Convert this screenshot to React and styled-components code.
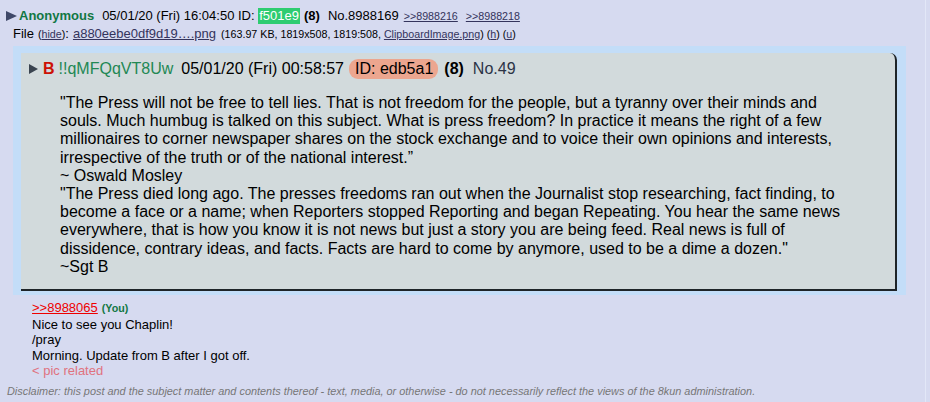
import React from "react";
import styled, { createGlobalStyle } from "styled-components";

const Global = createGlobalStyle`
  html, body { margin: 0; padding: 0; background: #d6daf0; }
  body { font-family: "Liberation Sans", Arial, sans-serif; font-size: 13px; color: #000; }
`;

const Page = styled.div`
  width: 925px;
  height: 402px;
  border-right: 1px solid #e2e7f7;
  box-sizing: content-box;
  overflow: hidden;
`;

const Head = styled.div`
  display: flex;
  align-items: baseline;
  white-space: nowrap;
  padding: 8px 0 0 6px;
  line-height: 16px;
`;

const ArrowSvg = styled.svg`
  flex: none;
  align-self: center;
  margin-right: ${(p) => p.$gap || "3px"};
`;

const Arrow = ({ w, h, color, gap }) => (
  <ArrowSvg width={w} height={h} viewBox={`0 0 ${w} ${h}`} $gap={gap}>
    <polygon points={`0,0 ${w},${h / 2} 0,${h}`} fill={color} />
  </ArrowSvg>
);

const Name = styled.span`
  color: ${(p) => p.$color};
  font-weight: ${(p) => (p.$bold ? 700 : 400)};
  margin-right: ${(p) => p.$gap || "8px"};
`;

const Plain = styled.span`
  margin-right: ${(p) => p.$gap || "0"};
  font-weight: ${(p) => (p.$bold ? 700 : 400)};
  color: ${(p) => p.$color || "inherit"};
`;

const IdTag = styled.span`
  background: #2ecc71;
  color: #fff;
  padding: 0 1px;
  margin-right: 4px;
`;

const Small = styled.a`
  font-size: 10.7px;
  color: #34345c;
  text-decoration: underline;
  margin-right: ${(p) => p.$gap || "0"};
`;

const FileRow = styled.div`
  display: flex;
  align-items: baseline;
  white-space: nowrap;
  padding: 2px 0 0 13px;
  line-height: 16px;
`;

const FileLink = styled.a`
  color: #34345c;
  text-decoration: underline;
  margin-right: 5px;
`;

const Details = styled.span`
  font-size: 10.7px;
`;

const Outer = styled.div`
  margin: 4px 0 0 13px;
  width: 893px;
  box-sizing: border-box;
  background: #c3ddf8;
  padding: 7px 9px 4px 8px;
`;

const Inner = styled.div`
  background: #d2dadc;
  border-right: 2px solid #1e2428;
  border-bottom: 2px solid #1e2428;
  border-top-right-radius: 7px;
  padding: 6px 10px 13px 8px;
  font-size: 16px;
  line-height: 18.2px;
`;

const InnerHead = styled.div`
  display: flex;
  align-items: center;
  white-space: nowrap;
  line-height: 20px;
`;

const Pill = styled.span`
  background: #eca68f;
  border-radius: 9px;
  padding: 0 5px 0 6px;
  margin-right: 6px;
  line-height: 20px;
`;

const Body = styled.div`
  padding: 15px 35px 0 31px;
`;

const Line = styled.div``;

const Reply = styled.div`
  padding: 5px 0 0 32px;
  line-height: 15.5px;
`;

const QuoteLink = styled.a`
  color: #e00;
  text-decoration: underline;
  margin-right: 4px;
`;

const You = styled.span`
  color: #117743;
  font-weight: 700;
  font-size: 10.7px;
`;

const Pink = styled.div`
  color: #e0727f;
`;

const Disclaimer = styled.div`
  font-style: italic;
  font-size: 10.9px;
  color: #777;
  padding: 6px 0 0 7px;
`;

export default function App() {
  return (
    <Page>
      <Global />
      <Head>
        <Arrow w={11} h={10} color="#3f4868" gap="2px" />
        <Name $color="#117743" $bold $gap="8px">Anonymous</Name>
        <Plain>05/01/20 (Fri) 16:04:50 ID:&nbsp;</Plain>
        <IdTag>f501e9</IdTag>
        <Plain $bold $gap="8px">(8)</Plain>
        <Plain $gap="5px">No.8988169</Plain>
        <Small $gap="8px">&gt;&gt;8988216</Small>
        <Small>&gt;&gt;8988218</Small>
      </Head>
      <FileRow>
        <Plain $gap="4px">File</Plain>
        <Details>(<Small>hide</Small>)</Details>
        <Plain $gap="4px">:</Plain>
        <FileLink>a880eebe0df9d19….png</FileLink>
        <Details>
          (163.97 KB, 1819x508, 1819:508, <Small>ClipboardImage.png</Small>) (<Small>h</Small>) (<Small>u</Small>)
        </Details>
      </FileRow>
      <Outer>
        <Inner>
          <InnerHead>
            <Arrow w={9} h={10} color="#3a4450" gap="5px" />
            <Name $color="#cc1105" $bold $gap="4px">B</Name>
            <Name $color="#228854" $gap="8px">!!qMFQqVT8Uw</Name>
            <Plain $gap="5px">05/01/20 (Fri) 00:58:57</Plain>
            <Pill>ID: edb5a1</Pill>
            <Plain $bold $gap="9px">(8)</Plain>
            <Plain $color="#2b3346">No.49</Plain>
          </InnerHead>
          <Body>
            <Line>"The Press will not be free to tell lies. That is not freedom for the people, but a tyranny over their minds and souls. Much humbug is talked on this subject. What is press freedom? In practice it means the right of a few millionaires to corner newspaper shares on the stock exchange and to voice their own opinions and interests, irrespective of the truth or of the national interest.”</Line>
            <Line>~ Oswald Mosley</Line>
            <Line>"The Press died long ago. The presses freedoms ran out when the Journalist stop researching, fact finding, to become a face or a name; when Reporters stopped Reporting and began Repeating. You hear the same news everywhere, that is how you know it is not news but just a story you are being feed. Real news is full of dissidence, contrary ideas, and facts. Facts are hard to come by anymore, used to be a dime a dozen."</Line>
            <Line>~Sgt B</Line>
          </Body>
        </Inner>
      </Outer>
      <Reply>
        <div>
          <QuoteLink>&gt;&gt;8988065</QuoteLink>
          <You>(You)</You>
        </div>
        <div>Nice to see you Chaplin!</div>
        <div>/pray</div>
        <div>Morning. Update from B after I got off.</div>
        <Pink>&lt; pic related</Pink>
      </Reply>
      <Disclaimer>
        Disclaimer: this post and the subject matter and contents thereof - text, media, or otherwise - do not necessarily reflect the views of the 8kun administration.
      </Disclaimer>
    </Page>
  );
}
